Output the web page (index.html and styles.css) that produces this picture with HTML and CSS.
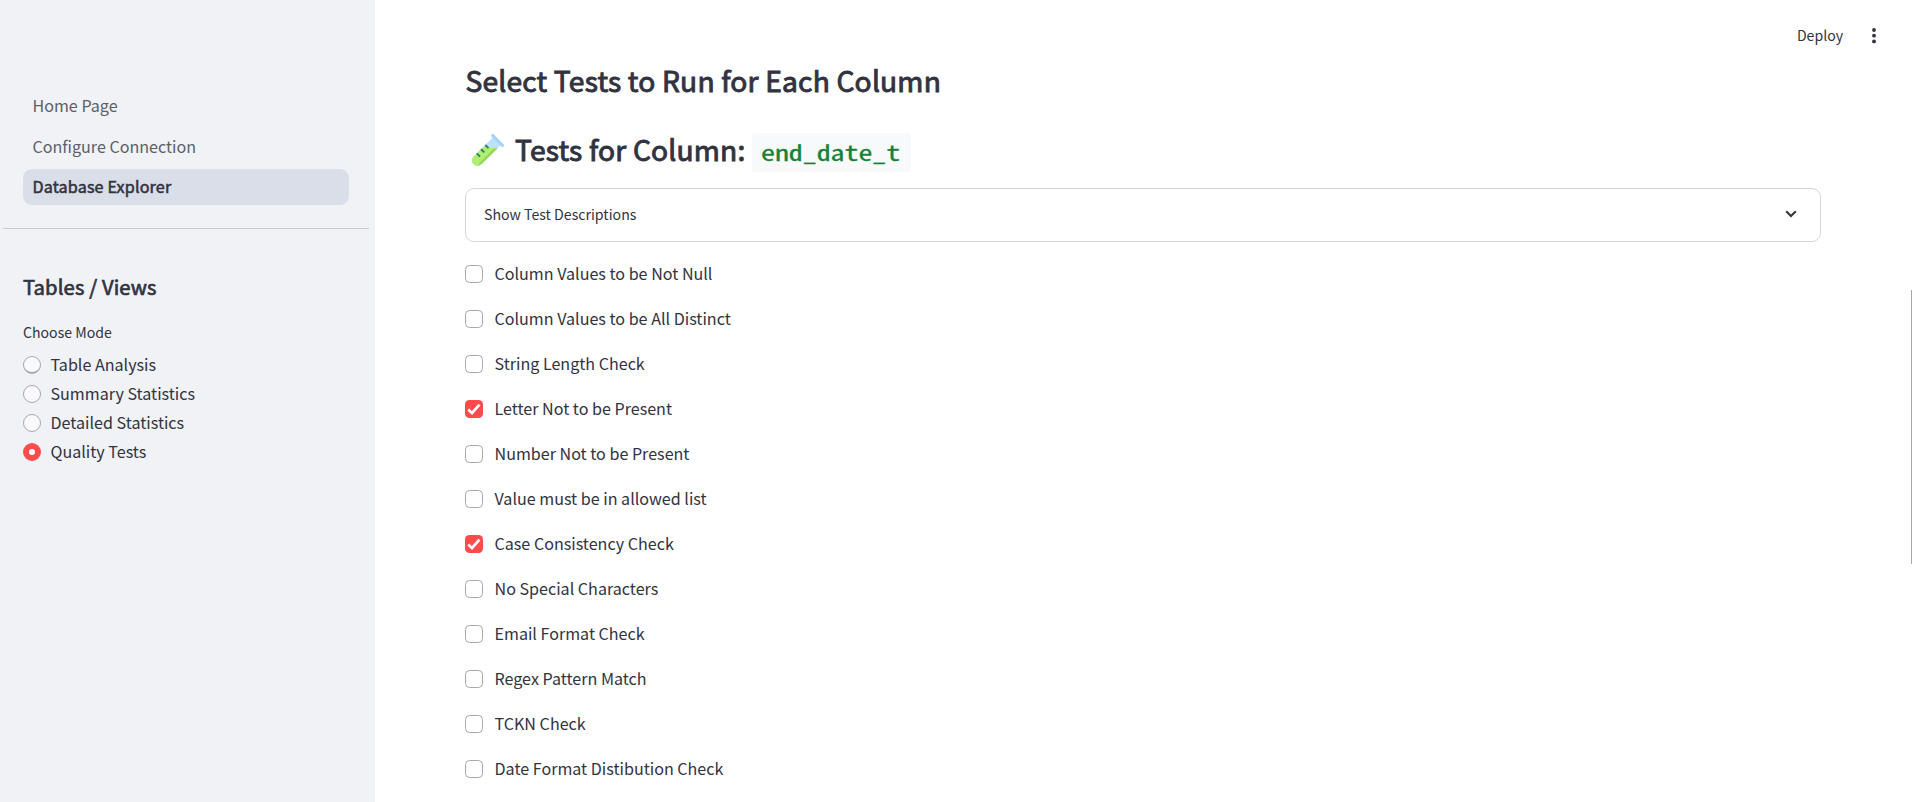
FILE: index.html
```html
<!DOCTYPE html>
<html lang="en">
<head>
<meta charset="utf-8">
<title>Database Explorer</title>
<link rel="stylesheet" href="styles.css">
</head>
<body>
<div class="app">
  <aside class="sidebar">
    <nav class="nav">
      <a class="nav-item">Home Page</a>
      <a class="nav-item">Configure Connection</a>
      <a class="nav-item active"><span>Database Explorer</span></a>
    </nav>
    <hr class="divider">
    <section class="panel">
      <h3 class="panel-title">Tables / Views</h3>
      <p class="panel-label">Choose Mode</p>
      <div class="radios">
        <label class="radio"><span class="dot raised"></span><span class="label">Table Analysis</span></label>
        <label class="radio"><span class="dot"></span><span class="label">Summary Statistics</span></label>
        <label class="radio"><span class="dot"></span><span class="label">Detailed Statistics</span></label>
        <label class="radio"><span class="dot on"></span><span class="label">Quality Tests</span></label>
      </div>
    </section>
  </aside>
  <main class="main">
    <h2 class="title">Select Tests to Run for Each Column</h2>
    <h2 class="subtitle">
      <svg class="tube" viewBox="0 0 36 36">
        <g transform="rotate(45 18 18)">
          <path d="M12.500 3h11v27a5.500 5.500 0 0 1-11 0z" fill="#bfe0fb"/>
          <path d="M12.500 16L23.500 7.500V30a5.500 5.500 0 0 1-11 0z" fill="#b0ed71"/>
          <path d="M21 10v21.500q2.500-.500 2.500-3V7.500z" fill="#92d85c"/>
          <rect x="9.500" y="0" width="17" height="3.200" rx="1.600" fill="#a6d3fa"/>
          <path d="M12.500 13.500h4.500M12.500 19.500h4.500M12.500 25.500h4.500" stroke="#1e8a68" stroke-width="2"/>
        </g>
      </svg>
      <span class="subtitle-text">Tests for Column:</span>
      <code class="code"><span class="code-text">end_date_t</span></code>
    </h2>
    <div class="expander">
      <span class="label">Show Test Descriptions</span>
      <svg class="chevron" viewBox="0 0 12 8"><path d="M1.200 1.200L6 6l4.800-4.800" fill="none" stroke="#31333f" stroke-width="2"/></svg>
    </div>
    <div class="checks">
      <label class="check"><span class="box"></span><span class="label">Column Values to be Not Null</span></label>
      <label class="check"><span class="box"></span><span class="label">Column Values to be All Distinct</span></label>
      <label class="check"><span class="box"></span><span class="label">String Length Check</span></label>
      <label class="check"><span class="box on"><svg viewBox="0 0 18 18"><path d="M3.200 9.600L7 13l7.500-8.300" fill="none" stroke="#fff" stroke-width="2.700"/></svg></span><span class="label">Letter Not to be Present</span></label>
      <label class="check"><span class="box"></span><span class="label">Number Not to be Present</span></label>
      <label class="check"><span class="box"></span><span class="label">Value must be in allowed list</span></label>
      <label class="check"><span class="box on"><svg viewBox="0 0 18 18"><path d="M3.200 9.600L7 13l7.500-8.300" fill="none" stroke="#fff" stroke-width="2.700"/></svg></span><span class="label">Case Consistency Check</span></label>
      <label class="check"><span class="box"></span><span class="label">No Special Characters</span></label>
      <label class="check"><span class="box"></span><span class="label">Email Format Check</span></label>
      <label class="check"><span class="box"></span><span class="label">Regex Pattern Match</span></label>
      <label class="check"><span class="box"></span><span class="label">TCKN Check</span></label>
      <label class="check"><span class="box"></span><span class="label">Date Format Distibution Check</span></label>
    </div>
  </main>
  <div class="toolbar">
    <span class="label">Deploy</span>
    <svg class="kebab" viewBox="0 0 4 16"><circle cx="2" cy="2" r="1.900"/><circle cx="2" cy="7.700" r="1.900"/><circle cx="2" cy="13.400" r="1.900"/></svg>
  </div>
  <div class="scroll-thumb"></div>
</div>
</body>
</html>
```
FILE: styles.css
```css
* { box-sizing: border-box; }
body {
  margin: 0;
  background: #fff;
  color: #31333f;
  font-family: "Noto Sans CJK SC", "Noto Sans", sans-serif;
  font-size: 16.1px;
  line-height: 28px;
}
h2, h3, p { margin: 0; }
.label { padding-bottom: 2px; }
.app { position: relative; display: flex; width: 1912px; height: 802px; overflow: hidden; }
.sidebar { width: 375px; background: #f0f2f6; padding-top: 88px; flex: none; }
.nav { display: flex; flex-direction: column; gap: 4.5px; padding: 0 26px 0 23px; }
.nav-item { height: 36px; line-height: 34px; padding-left: 9.5px; border-radius: 9px; color: #5c5e69; white-space: nowrap; }
.nav-item.active { background: #dadee9; color: #31333f; font-weight: 400; letter-spacing: 0.17px; -webkit-text-stroke: 0.55px; }
.divider { height: 1px; border: 0; background: #c8cace; margin: 23px 6px 0 3px; }
.panel { padding: 41px 23px 0; }
.panel-title { font-size: 20.2px; font-weight: 400; line-height: 34px; letter-spacing: 0.14px; -webkit-text-stroke: 0.7px; }
.panel-label { font-size: 14.1px; line-height: 24px; margin-top: 16px; }
.radios { display: flex; flex-direction: column; gap: 1px; margin-top: 7px; }
.radio { display: flex; align-items: center; gap: 9.5px; height: 28px; }
.dot { width: 18px; height: 18px; border-radius: 50%; border: 1px solid #a6a8af; background: #f9f9fb; flex: none; }
.dot.raised { border-bottom-width: 2px; }
.dot.on { border: 6px solid #ff4b4b; background: #fff; }
.main { flex: 1; padding: 58px 91px 0 90px; }
.title, .subtitle { font-size: 28.2px; font-weight: 400; line-height: 44px; white-space: nowrap; letter-spacing: 0.19px; -webkit-text-stroke: 0.95px; }
.title { padding-left: 0.5px; }
.subtitle { display: flex; align-items: center; height: 44px; margin-top: 26px; }
.tube { width: 36px; height: 36px; margin: 3px 0 0 2.5px; }
.subtitle-text { margin-left: 11.5px; padding-bottom: 2px; }
.code { width: 159px; height: 39px; margin: 5px 0 0 6px; padding-left: 9.5px; background: #f8f9fb; border-radius: 4px; letter-spacing: 0; -webkit-text-stroke: 0.3px; }
/* The code face is drawn wider than its natural half-em advance */
.code-text { display: inline-block; transform: scaleX(1.265); transform-origin: left; font: 400 22px/36px "Noto Sans Mono CJK SC", "DejaVu Sans Mono", monospace; color: #158237; vertical-align: top; }
.expander { display: flex; align-items: center; justify-content: space-between; height: 54px; margin-top: 16px; padding: 0 23px 0 18px; border: 1px solid #d6d6d9; border-radius: 9px; font-size: 14.15px; }
.chevron { width: 12px; height: 8px; margin-bottom: 2px; }
.checks { display: flex; flex-direction: column; gap: 17px; margin-top: 18px; }
.check { display: flex; align-items: center; gap: 11.5px; height: 28px; }
.box { width: 18px; height: 18px; border: 1px solid #a6a8af; border-radius: 4.5px; flex: none; }
.box.on { border: 0; background: #ff4b4b; }
.box svg { display: block; width: 18px; height: 18px; }
.toolbar { position: absolute; top: 21px; right: 36px; display: flex; align-items: center; gap: 29px; font-size: 14.1px; }
.kebab { width: 4px; height: 16px; fill: #31333f; }
.scroll-thumb { position: absolute; right: 0; top: 290px; width: 1px; height: 274px; background: #a8a8a8; }
```
